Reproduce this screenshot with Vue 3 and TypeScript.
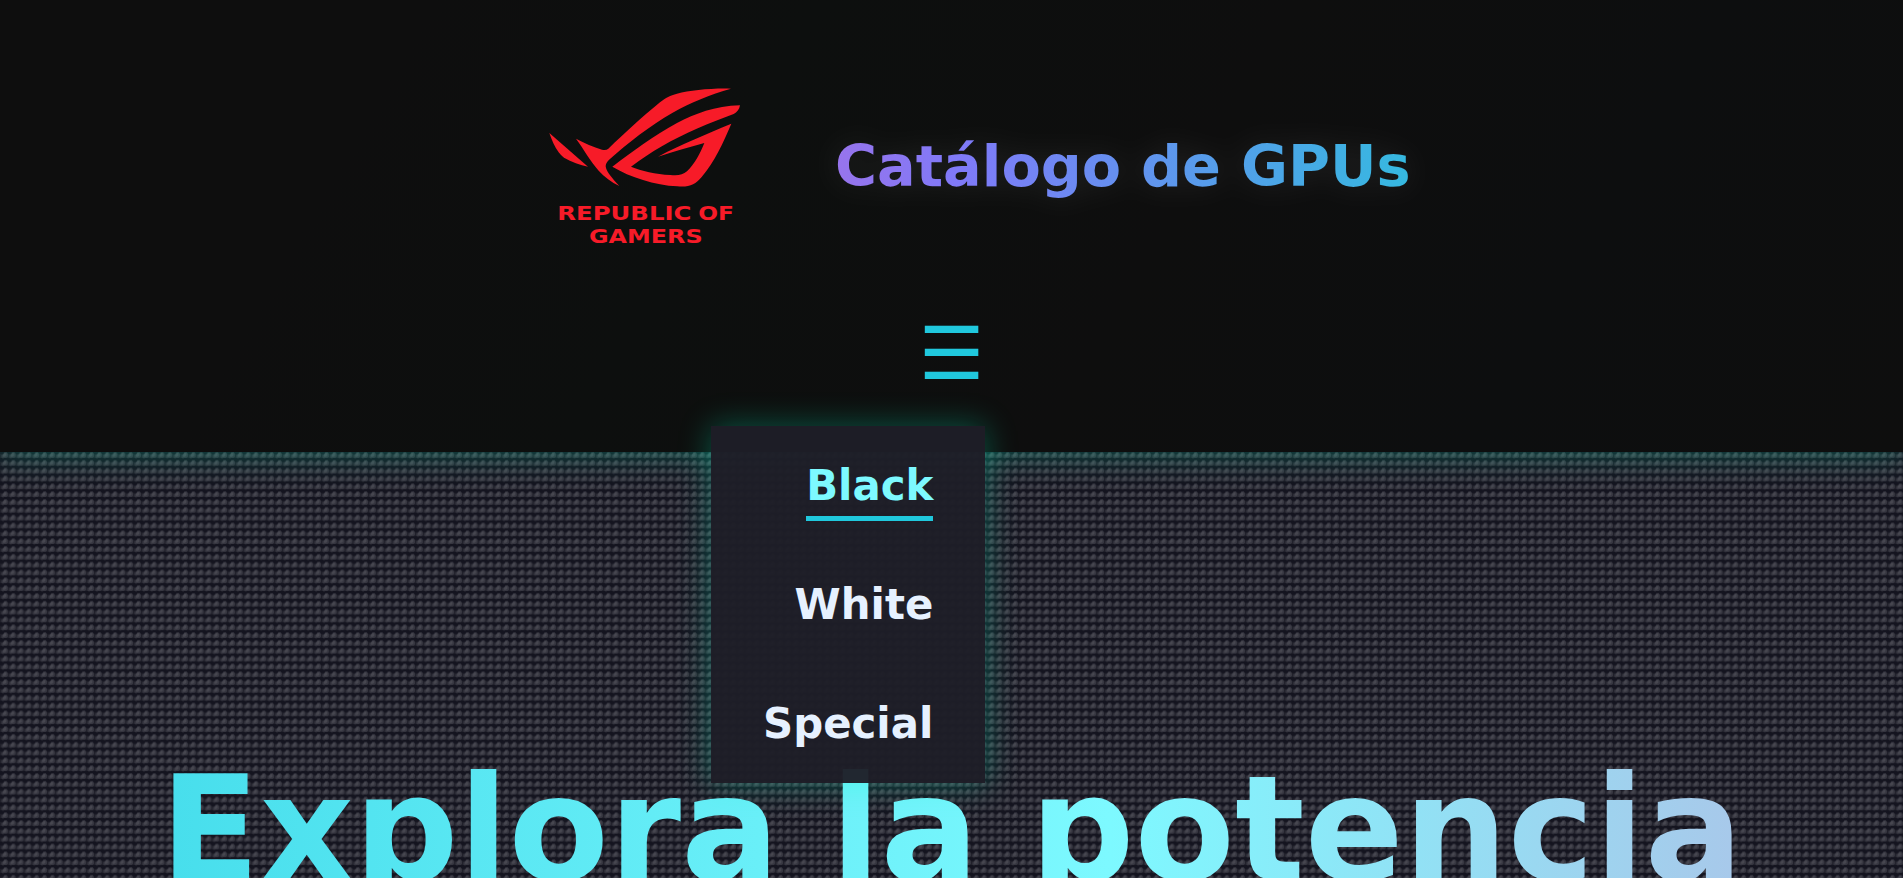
<script setup lang="ts">
import { ref } from 'vue'

interface Section {
  id: string
  label: string
}

const sections: Section[] = [
  { id: 'black', label: 'Black' },
  { id: 'white', label: 'White' },
  { id: 'special', label: 'Special' },
]
const active = ref('black')
const open = ref(true)
</script>

<template>
  <div class="page">
    <header class="header">
      <div class="brand">
        <svg class="logo" viewBox="0 0 690 570" role="img" aria-label="Republic of Gamers">
          <g fill="#f71b28">
            <path d="M603 56C546 54 480 61 441 71C420 76 408 83 390 97C338 139 283 191 235 236Q228 242 216 239C190 231 164 219 138 206C161 237 181 274 206 302C223 321 244 336 268 348C254 332 237 314 230 299C224 286 228 279 239 268C293 219 360 167 428 128C482 98 540 73 603 56Z" />
            <path d="M58 189L174 290C150 286 125 275 102 263Q94 258 86 247C73 229 65 209 58 189Z" />
            <path d="M630 106C554 108 496 131 441 159C374 195 309 243 247 290C301 322 374 345 442 349C478 352 496 344 515 321C555 273 580 218 604 161C530 192 455 222 384 260C431 246 477 231 523 219C510 252 494 282 471 304C458 315 445 317 421 315C377 313 334 302 303 290C362 245 429 207 500 176C540 158 578 145 611 132C621 127 628 119 630 106Z" />
          </g>
          <g class="logo-text" fill="#f71b28">
            <text x="82" y="450" textLength="402" lengthAdjust="spacingAndGlyphs">REPUBLIC</text>
            <text x="505" y="450" textLength="107" lengthAdjust="spacingAndGlyphs">OF</text>
            <text x="177" y="518" textLength="341" lengthAdjust="spacingAndGlyphs">GAMERS</text>
          </g>
        </svg>
        <h1 class="title">Catálogo de GPUs</h1>
      </div>
      <nav class="nav">
        <button class="toggle" type="button" aria-label="Menú" @click="open = !open">☰</button>
        <ul v-if="open" class="menu">
          <li v-for="s in sections" :key="s.id">
            <a class="link" :class="{ active: active === s.id }" @click="active = s.id">{{ s.label }}</a>
          </li>
        </ul>
      </nav>
    </header>

    <main class="hero">
      <svg class="weave" aria-hidden="true">
        <defs>
          <pattern id="weave" width="7.83" height="7.83" patternUnits="userSpaceOnUse">
            <rect width="7.83" height="7.83" fill="#14141f" />
            <rect y="1.8" width="7.83" height="4" fill="#20202a" />
            <path d="M1.4 5.6V3.2L3 2.4L4.4 0.2H6.6L7.8 2V4.6L6.4 5.8H4L3 6.4Z" fill="#363640" />
            <path d="M3 4.6V3L4.4 1.2H6.2V3.6L4.8 4.6Z" fill="#474750" />
          </pattern>
        </defs>
        <rect width="100%" height="100%" fill="url(#weave)" />
      </svg>
      <h2 class="headline">Explora la potencia</h2>
    </main>
  </div>
</template>

<style>
body {
  margin: 0;
  background: #161620;
}
</style>

<style scoped>
.page {
  height: 878px;
  overflow: hidden;
  display: flex;
  flex-direction: column;
  font-family: 'DejaVu Sans', sans-serif;
}

.header {
  position: relative;
  z-index: 2;
  box-sizing: border-box;
  height: 452px;
  flex: none;
  display: flex;
  flex-direction: column;
  align-items: center;
  padding-top: 70px;
  background: linear-gradient(120deg, #0e0e0e 20%, #0d0f0e 38%, #0e0e0e 60%, #0d0e0f 80%, #0e0e0e);
  box-shadow: 0 0 32px rgba(0, 255, 200, 0.3);
}

.brand {
  display: flex;
  gap: 75px;
  width: 883px;
  height: 190px;
  margin-left: 40px;
}

.logo {
  width: 230px;
  height: 190px;
  flex: none;
}

.logo-text {
  font: bold 58px 'DejaVu Sans', sans-serif;
}

.title {
  margin: 63px 0 0;
  height: 67px;
  white-space: nowrap;
  font-size: 57.3px;
  line-height: 67px;
  font-weight: 700;
  color: transparent;
  background: linear-gradient(90deg, #9774ec, #7f7af8 22%, #35b9e0);
  background-clip: text;
  filter: drop-shadow(0 0 16px rgba(255, 255, 255, 0.1));
}

.nav {
  position: relative;
  margin-top: 42px;
}

.toggle {
  display: block;
  border: 0;
  padding: 0;
  background: none;
  color: #20c8dd;
  font: 73.2px/103px 'DejaVu Sans', sans-serif;
}

.menu {
  position: absolute;
  top: 124px;
  right: -1px;
  box-sizing: border-box;
  width: 274px;
  height: 357px;
  margin: 0;
  padding: 35px 52px 0 0;
  list-style: none;
  display: flex;
  flex-direction: column;
  gap: 59px;
  align-items: flex-end;
  background: rgba(30, 30, 40, 0.96);
  box-shadow: 0 0 30px rgba(0, 255, 200, 0.3);
}

.menu li {
  height: 60px;
}

.link {
  display: block;
  height: 55px;
  font-size: 41.87px;
  line-height: 49px;
  font-weight: 700;
  color: #e6f1ff;
  border-bottom: 5px solid transparent;
}

.link.active {
  color: #7df9ff;
  border-color: #20c8dd;
}

.hero {
  position: relative;
  flex: 1;
  display: flex;
  justify-content: center;
}

.weave {
  position: absolute;
  inset: 0;
  width: 100%;
  height: 100%;
}

.headline {
  position: relative;
  margin: 292px 0 0;
  height: 170px;
  white-space: nowrap;
  font-size: 146.1px;
  line-height: 170px;
  font-weight: 700;
  color: transparent;
  background: linear-gradient(90deg, #47deec, #7df9ff 60%, #a8c8ea);
  background-clip: text;
}
</style>
